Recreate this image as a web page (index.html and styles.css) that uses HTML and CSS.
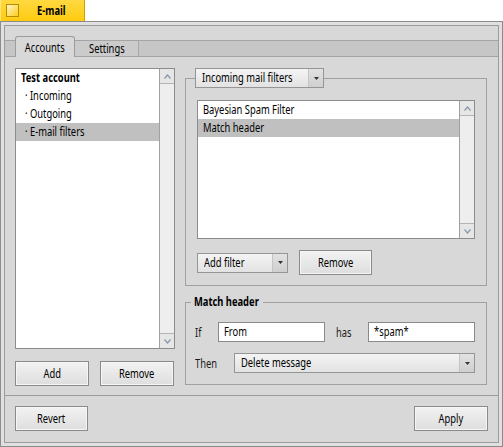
FILE: index.html
```html
<!DOCTYPE html>
<html lang="en">
<head>
    <meta charset="UTF-8">
    <title>E-mail</title>
    <link rel="stylesheet" href="styles.css">
</head>
<body>
    <div class="titletab">
        <span class="closebox"></span>
        <span class="title"><span class="n">E-mail</span></span>
    </div>
    <div class="window">
        <div class="content">
            <div class="tabview">
                <div class="tabbar">
                    <div class="tab selected"><span class="n">Accounts</span></div>
                    <div class="tab"><span class="n">Settings</span></div>
                </div>
                <div class="pane">
                    <div class="leftcol">
                        <div class="listview accounts">
                            <ul class="items">
                                <li class="bold"><span class="n">Test account</span></li>
                                <li class="sub"><span class="n">· Incoming</span></li>
                                <li class="sub"><span class="n">· Outgoing</span></li>
                                <li class="sub active"><span class="n">· E-mail filters</span></li>
                            </ul>
                            <div class="scrollbar">
                                <span class="arrow up"><svg width="7" height="5" viewBox="0 0 7 5"><path d="M0.5 4.5 L3.5 1 L6.5 4.5" fill="none" stroke="#8a96a8" stroke-width="1.2"/></svg></span>
                                <span class="track"></span>
                                <span class="arrow down"><svg width="7" height="5" viewBox="0 0 7 5"><path d="M0.5 0.5 L3.5 4 L6.5 0.5" fill="none" stroke="#8a96a8" stroke-width="1.2"/></svg></span>
                            </div>
                        </div>
                        <div class="buttonrow">
                            <button class="btn"><span class="n">Add</span></button>
                            <button class="btn"><span class="n">Remove</span></button>
                        </div>
                    </div>

                    <div class="rightcol">
                        <fieldset class="group filters">
                            <legend>
                                <div class="menufield chain">
                                    <span class="label"><span class="n">Incoming mail filters</span></span>
                                    <span class="popup"><svg width="5" height="3" viewBox="0 0 5 3"><path d="M0 0 H5 L2.5 3 Z" fill="#333"/></svg></span>
                                </div>
                            </legend>
                            <div class="listview filterlist">
                                <ul class="items">
                                    <li><span class="n">Bayesian Spam Filter</span></li>
                                    <li class="active"><span class="n">Match header</span></li>
                                </ul>
                                <div class="scrollbar">
                                    <span class="arrow up"><svg width="7" height="5" viewBox="0 0 7 5"><path d="M0.5 4.5 L3.5 1 L6.5 4.5" fill="none" stroke="#8a96a8" stroke-width="1.2"/></svg></span>
                                    <span class="track"></span>
                                    <span class="arrow down"><svg width="7" height="5" viewBox="0 0 7 5"><path d="M0.5 0.5 L3.5 4 L6.5 0.5" fill="none" stroke="#8a96a8" stroke-width="1.2"/></svg></span>
                                </div>
                            </div>
                            <div class="filterrow">
                                <div class="menufield addfilter">
                                    <span class="label"><span class="n">Add filter</span></span>
                                    <span class="popup"><svg width="5" height="3" viewBox="0 0 5 3"><path d="M0 0 H5 L2.5 3 Z" fill="#333"/></svg></span>
                                </div>
                                <button class="btn remove-filter"><span class="n">Remove</span></button>
                            </div>
                        </fieldset>

                        <fieldset class="group matchheader">
                            <legend><span class="n">Match header</span></legend>
                            <div class="matchrow">
                                <span class="caption if"><span class="n">If</span></span>
                                <span class="textfield"><span class="n">From</span></span>
                                <span class="caption has"><span class="n">has</span></span>
                                <span class="textfield"><span class="n">*spam*</span></span>
                            </div>
                            <div class="matchrow">
                                <span class="caption then"><span class="n">Then</span></span>
                                <div class="menufield action">
                                    <span class="label"><span class="n">Delete message</span></span>
                                    <span class="popup"><svg width="5" height="3" viewBox="0 0 5 3"><path d="M0 0 H5 L2.5 3 Z" fill="#333"/></svg></span>
                                </div>
                            </div>
                        </fieldset>
                    </div>
                </div>
            </div>
            <div class="footer">
                <button class="btn revert"><span class="n">Revert</span></button>
                <button class="btn apply"><span class="n">Apply</span></button>
            </div>
        </div>
    </div>
</body>
</html>
```

FILE: styles.css
```css
body {
    margin: 0;
    background-color: #ffffff;
    font-family: "Noto Sans", "DejaVu Sans", sans-serif;
    font-size: 12px;
    color: #000000;
}

/* the system font is a narrow one: squeeze Noto Sans to its width */
.n {
    display: inline-block;
    white-space: nowrap;
    transform: scaleX(0.78);
    transform-origin: 0 50%;
}

.title .n,
.tab .n,
.btn .n {
    transform-origin: 50% 50%;
}

/* window tab */

.titletab {
    width: 85px;
    height: 21px;
    box-sizing: border-box;
    display: flex;
    align-items: center;
    padding-left: 5px;
    background: linear-gradient(#ffd940, #ffcb10);
    border-left: 1px solid #ffe680;
    border-right: 1px solid #c9a20a;
}

.closebox {
    width: 13px;
    height: 13px;
    box-sizing: border-box;
    border: 1px solid #b38f00;
    background: linear-gradient(135deg, #fff6c8, #ffcc1a);
}

.title {
    flex: 1;
    text-align: center;
    font-weight: bold;
}

/* window frame */

.window {
    width: 503px;
    height: 426px;
    box-sizing: border-box;
    border: 1px solid #8c8c8c;
    padding: 3px;
    background-color: #e0e0e0;
}

.content {
    height: 100%;
    box-sizing: border-box;
    border: 1px solid #9c9c9c;
    background-color: #d8d8d8;
    display: flex;
    flex-direction: column;
}

/* tabs */

.tabbar {
    height: 20px;
    margin-top: 10px;
    padding-left: 10px;
    display: flex;
    align-items: flex-end;
    background: linear-gradient(#d8d8d8 0 4px, #a4a4a4 4px 5px, #c6c6c6 5px);
    border-bottom: 1px solid #a4a4a4;
}

.tab {
    height: 15px;
    line-height: 15px;
    width: 63px;
    text-align: center;
    border-right: 1px solid #a8a8a8;
    background-color: #cbcbcb;
}

.tab.selected {
    width: 58px;
    height: 20px;
    line-height: 21px;
    margin-bottom: -1px;
    border: 1px solid #9c9c9c;
    border-bottom: none;
    border-radius: 3px 3px 0 0;
    background-color: #d8d8d8;
}

.pane {
    display: flex;
    gap: 10px;
    padding: 11px 10px 9px 10px;
    border-bottom: 1px solid #9c9c9c;
}

.leftcol {
    width: 160px;
}

/* lists */

.listview {
    display: flex;
    box-sizing: border-box;
    border: 1px solid #8c8c8c;
    background-color: #ffffff;
}

.listview.accounts {
    height: 281px;
}

.listview.filterlist {
    height: 139px;
}

.items {
    flex: 1;
    min-width: 0;
    list-style: none;
    margin: 0;
    padding: 0;
}

.items li {
    height: 18px;
    line-height: 18px;
    padding-left: 5px;
    white-space: nowrap;
}

.items li.bold {
    font-weight: bold;
}

.items li.sub {
    padding-left: 9px;
}

.items li.active {
    background-color: #c0c0c0;
}

.scrollbar {
    width: 14px;
    display: flex;
    flex-direction: column;
    border-left: 1px solid #a0a0a0;
    background-color: #ebebeb;
}

.arrow {
    height: 14px;
    display: flex;
    align-items: center;
    justify-content: center;
    background-color: #e6e6e6;
}

.arrow.up {
    border-bottom: 1px solid #b4b4b4;
}

.arrow.down {
    border-top: 1px solid #b4b4b4;
}

.track {
    flex: 1;
    background-color: #eeeeee;
}

/* buttons */

.btn {
    height: 25px;
    box-sizing: border-box;
    border: 1px solid #8a8a8a;
    box-shadow: inset 0 0 0 1px #f6f6f6;
    background: linear-gradient(#f2f2f2, #dedede);
    font-family: inherit;
    font-size: 12px;
    color: #000000;
    padding: 0;
    overflow: visible;
}

.buttonrow {
    display: flex;
    gap: 11px;
    margin-top: 12px;
}

.buttonrow .btn {
    width: 74px;
}

/* groups */

.rightcol {
    width: 302px;
}

.group {
    margin: 0;
    min-width: 0;
    border: 1px solid #a0a0a0;
}

.group.filters {
    padding: 0 11px 10px 11px;
}

.group.filters legend {
    margin-left: -2px;
    padding: 0;
}

.menufield {
    height: 20px;
    box-sizing: border-box;
    display: flex;
    border: 1px solid #959595;
    background: linear-gradient(#f4f4f4, #e2e2e2);
}

.menufield .label {
    flex: 1;
    min-width: 0;
    line-height: 18px;
    padding-left: 6px;
    white-space: nowrap;
}

.menufield .popup {
    width: 14px;
    display: flex;
    align-items: center;
    justify-content: center;
    border-left: 1px solid #c4c4c4;
    background: linear-gradient(#e2e2e2, #cfcfcf);
}

.menufield.chain {
    width: 129px;
}

.filterlist {
    margin-top: 12px;
}

.filterrow {
    display: flex;
    align-items: center;
    gap: 11px;
    margin-top: 11px;
}

.menufield.addfilter {
    width: 91px;
}

.btn.remove-filter {
    width: 73px;
}

.group.matchheader {
    margin-top: 8px;
    padding: 0 11px 11px 9px;
}

.group.matchheader legend {
    width: 66px;
    margin-left: -4px;
    padding: 0 3px;
    font-weight: bold;
    line-height: 16px;
    white-space: nowrap;
}

.matchrow {
    display: flex;
    align-items: center;
    height: 20px;
    margin-top: 12px;
}

.matchrow + .matchrow {
    margin-top: 11px;
}

.caption {
    color: #1a1a1a;
}

.caption.if {
    width: 23px;
}

.caption.has {
    width: 32px;
    margin-left: 11px;
}

.caption.then {
    width: 39px;
}

.textfield {
    width: 107px;
    height: 20px;
    box-sizing: border-box;
    border: 1px solid #8a8a8a;
    background-color: #ffffff;
    line-height: 18px;
    padding-left: 5px;
}

.menufield.action {
    width: 241px;
}

/* bottom buttons */

.footer {
    flex: 1;
    display: flex;
    justify-content: space-between;
    align-items: flex-start;
    padding: 10px 10px 0 10px;
}

.btn.revert {
    width: 73px;
}

.btn.apply {
    width: 74px;
}
```
